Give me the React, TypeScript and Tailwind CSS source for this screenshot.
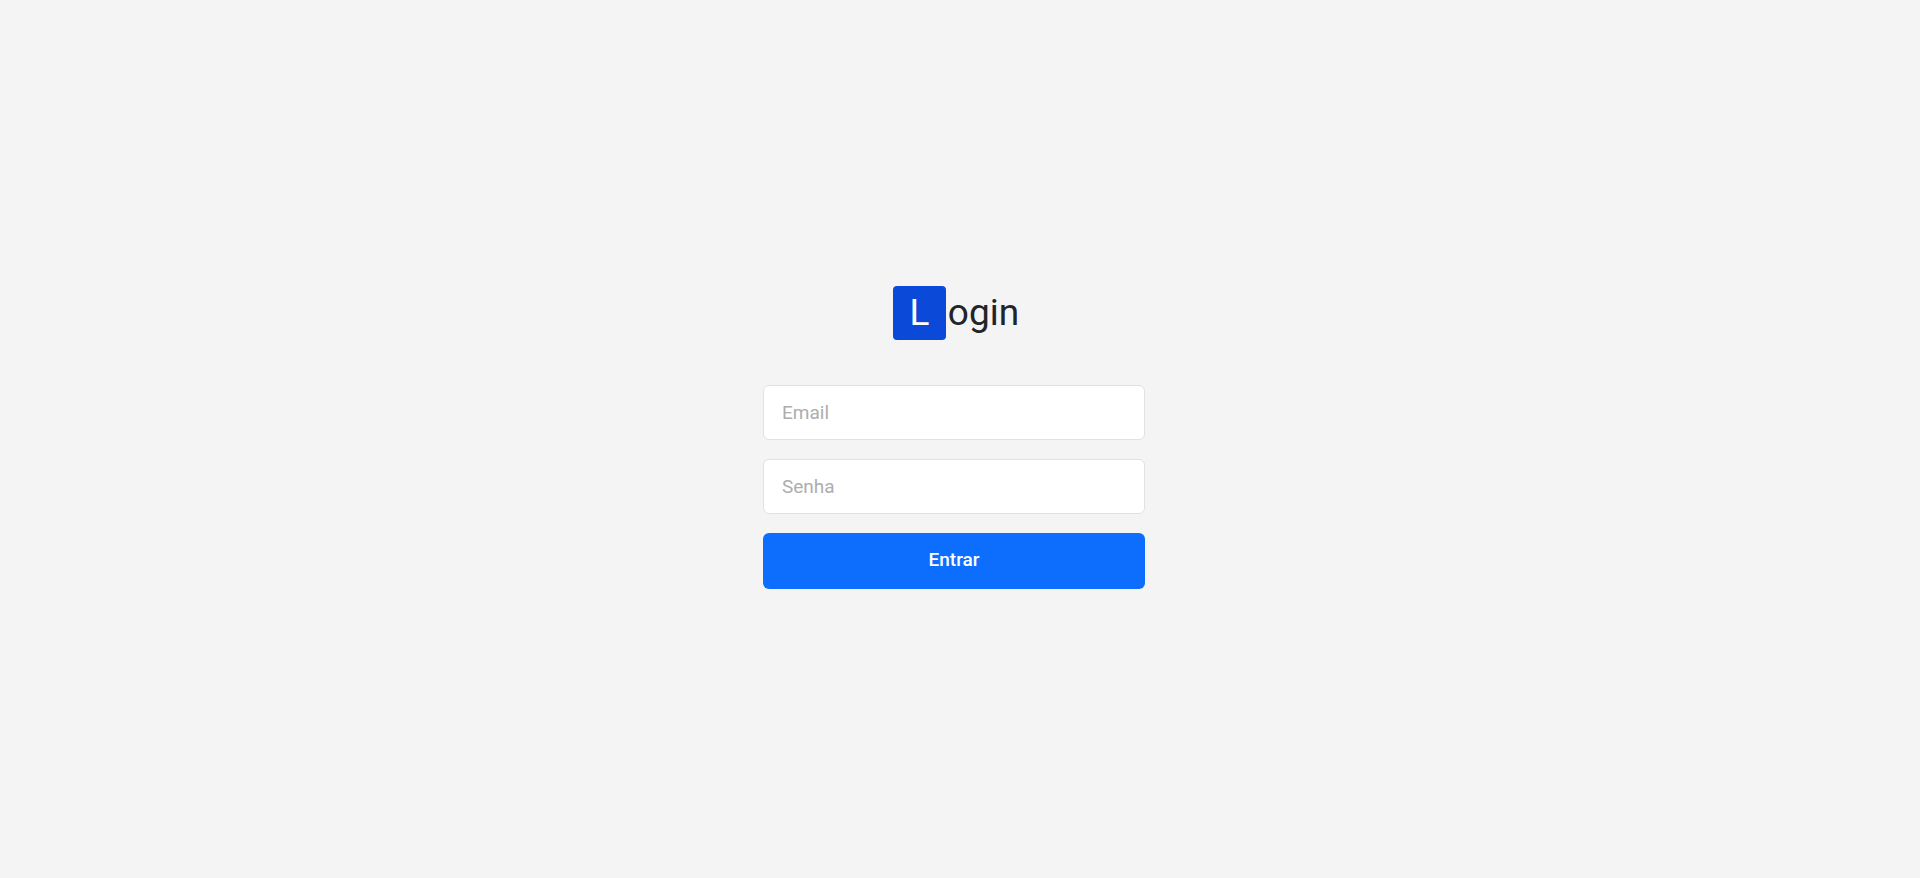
import React, { useState } from 'react';

const App: React.FC = () => {
  const [email, setEmail] = useState('');
  const [senha, setSenha] = useState('');

  return (
    <div
      className="min-h-screen bg-[#f4f4f4] flex items-center justify-center pr-[12px] pb-[4px]"
      style={{ fontFamily: 'Roboto, "Liberation Sans", sans-serif' }}
    >
      <div className="w-[382px] flex flex-col items-center">
        {/* Logo */}
        <div className="flex items-center mb-[45px] pl-[4px]">
          <span className="w-[53px] h-[54px] rounded-[4px] bg-[#0b4ad8] text-white text-[37px] leading-none flex items-center justify-center">
            L
          </span>
          <span className="text-[37px] leading-none text-[#212529] ml-[2px]">ogin</span>
        </div>

        <form className="w-full flex flex-col" onSubmit={(e) => e.preventDefault()}>
          <input
            type="email"
            value={email}
            onChange={(e) => setEmail(e.target.value)}
            placeholder="Email"
            className="w-full h-[55px] px-[18px] bg-white border border-[#dee2e6] rounded-[6px] text-[19px] text-[#212529] placeholder:text-[#adadad] outline-none"
          />
          <input
            type="password"
            value={senha}
            onChange={(e) => setSenha(e.target.value)}
            placeholder="Senha"
            className="w-full h-[55px] mt-[19px] px-[18px] bg-white border border-[#dee2e6] rounded-[6px] text-[19px] text-[#212529] placeholder:text-[#adadad] outline-none"
          />
          <button
            type="submit"
            className="w-full h-[56px] mt-[19px] bg-[#0d6efd] text-white rounded-[6px] text-[19px] font-medium"
          >
            Entrar
          </button>
        </form>
      </div>
    </div>
  );
};

export default App;
